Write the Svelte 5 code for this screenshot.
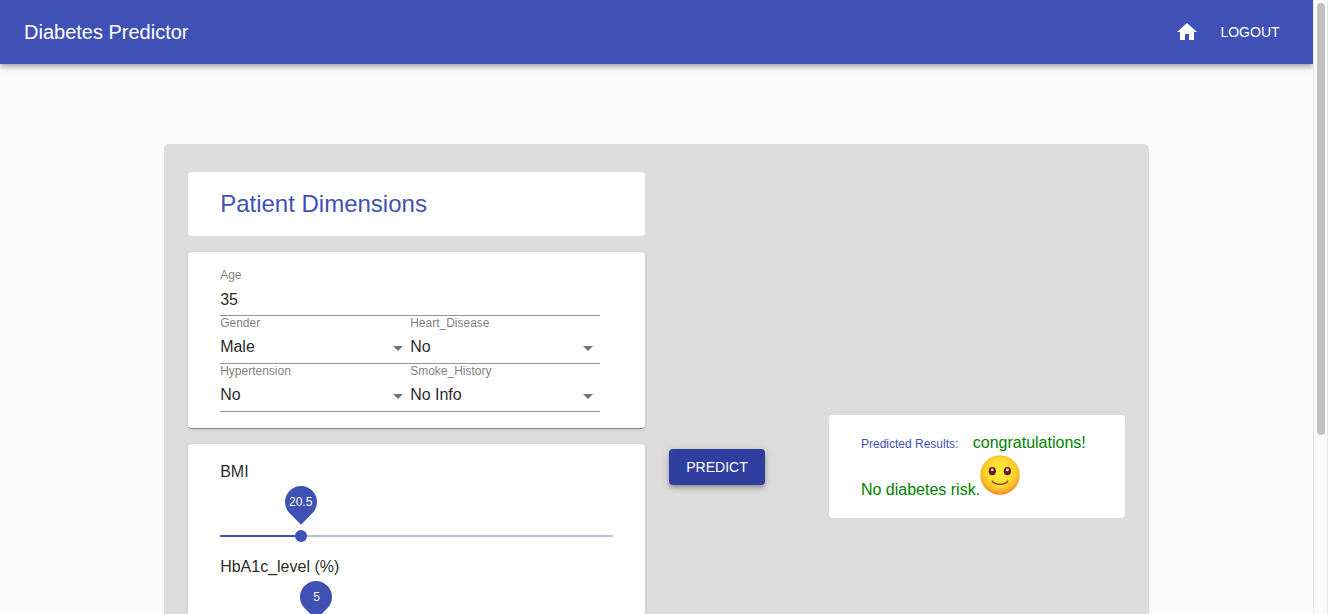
<script>
  let age = $state('35');

  const selects = $state([
    { id: 'gender', label: 'Gender', value: 'Male', options: ['Male', 'Female'] },
    { id: 'heart-disease', label: 'Heart_Disease', value: 'No', options: ['No', 'Yes'] },
    { id: 'hypertension', label: 'Hypertension', value: 'No', options: ['No', 'Yes'] },
    { id: 'smoke-history', label: 'Smoke_History', value: 'No Info', options: ['No Info', 'never', 'former', 'current'] }
  ]);

  const sliders = $state([
    { id: 'bmi', label: 'BMI', value: 20.5, min: 0, max: 100, step: 0.1 },
    { id: 'hba1c', label: 'HbA1c_level (%)', value: 5, min: 3.7, max: 9, step: 0.1 },
    { id: 'glucose', label: 'Blood_glucose_level', value: 100, min: 50, max: 300, step: 1 }
  ]);

  const percent = (s) => ((s.value - s.min) / (s.max - s.min)) * 100;
</script>

<div class="window">
  <div class="page">
    <header class="app-bar">
      <h1>Diabetes Predictor</h1>
      <nav>
        <a class="home" href="#home" aria-label="Home">
          <svg viewBox="0 0 24 24" width="24" height="24" aria-hidden="true">
            <path d="M10 20v-6h4v6h5v-8h3L12 3 2 12h3v8z" fill="currentColor" />
          </svg>
        </a>
        <button class="logout" type="button">LOGOUT</button>
      </nav>
    </header>

    <main class="panel">
      <div class="column">
        <section class="card heading">
          <h2>Patient Dimensions</h2>
        </section>

        <section class="card raised">
          <div class="fields">
            <div class="field wide">
              <label for="age">Age</label>
              <input id="age" type="text" bind:value={age} />
            </div>
            {#each selects as s (s.id)}
              <div class="field">
                <label for={s.id}>{s.label}</label>
                <select id={s.id} bind:value={s.value}>
                  {#each s.options as o}
                    <option value={o}>{o}</option>
                  {/each}
                </select>
                <svg class="arrow" viewBox="0 0 24 24" width="24" height="24" aria-hidden="true">
                  <path d="M7 10l5 5 5-5z" fill="currentColor" />
                </svg>
              </div>
            {/each}
          </div>
        </section>

        <section class="card raised">
          {#each sliders as s (s.id)}
            <div class="measure">
              <label for={s.id}>{s.label}</label>
              <div class="slider">
                <span class="rail"></span>
                <span class="track" style="width: {percent(s)}%"></span>
                <input id={s.id} type="range" min={s.min} max={s.max} step={s.step} bind:value={s.value} />
                <output class="bubble" for={s.id} style="left: {percent(s)}%">{s.value}</output>
              </div>
            </div>
          {/each}
        </section>
      </div>

      <div>
        <button class="predict" type="button">PREDICT</button>
      </div>

      <section class="card result">
        <span class="caption">Predicted Results:</span>
        <span class="message">congratulations!<br />No diabetes risk.<svg
            class="smile" viewBox="0 0 40 40" width="40" height="40" role="img" aria-label="Smiling face">
            <defs>
              <radialGradient id="face" cx="50%" cy="42%" r="58%">
                <stop offset="0" stop-color="#ffee38" />
                <stop offset="0.55" stop-color="#fddc30" />
                <stop offset="0.8" stop-color="#fbbd28" />
                <stop offset="1" stop-color="#f18420" />
              </radialGradient>
            </defs>
            <circle cx="20" cy="20" r="19.7" fill="url(#face)" />
            <ellipse cx="12.3" cy="16.2" rx="3.6" ry="4.1" fill="#6b1a2b" />
            <ellipse cx="27.4" cy="16.2" rx="3.6" ry="4.1" fill="#6b1a2b" />
            <circle cx="12.3" cy="14.8" r="1.4" fill="#f2dfe0" />
            <circle cx="27.4" cy="14.8" r="1.4" fill="#f2dfe0" />
            <path d="M12.2 26.2C15 30.4 25 30.4 27.8 26.2" fill="none" stroke="#8a4410" stroke-width="1.5" stroke-linecap="round" />
          </svg></span>
      </section>
    </main>
  </div>

  <div class="scrollbar" aria-hidden="true"><div class="thumb"></div></div>
</div>

<style>
  :global(body) {
    margin: 0;
    background: #fafafa;
  }

  .window {
    display: flex;
    height: 100vh;
    overflow: hidden;
    background: #fafafa;
    color: rgba(0, 0, 0, 0.87);
    font-family: 'Liberation Sans', Helvetica, Arial, sans-serif;
    font-size: 16px;
    line-height: 24px;
  }

  .window *,
  .window {
    box-sizing: border-box;
  }

  .page {
    flex: 1;
    min-width: 0;
    padding-bottom: 80px;
    overflow-x: hidden;
    overflow-y: auto;
    scrollbar-width: none;
  }

  .scrollbar {
    flex: none;
    width: 15px;
    padding: 3px;
    border: solid #e8e8e8;
    border-width: 0 1px;
  }

  .thumb {
    width: 8px;
    height: 71%;
    border-radius: 4px;
    background: #c1c1c1;
  }

  .app-bar {
    display: flex;
    align-items: center;
    justify-content: space-between;
    height: 64px;
    padding: 0 24px;
    background: #3f51b5;
    color: #fff;
    box-shadow:
      0 2px 4px -1px rgba(0, 0, 0, 0.2),
      0 4px 5px 0 rgba(0, 0, 0, 0.14),
      0 1px 10px 0 rgba(0, 0, 0, 0.12);
  }

  h1,
  h2 {
    margin: 0;
    font-weight: 400;
  }

  h1 {
    font-size: 20px;
    line-height: 32px;
  }

  h2 {
    font-size: 24px;
    line-height: 32px;
    color: #3f51b5;
  }

  nav {
    display: flex;
    align-items: center;
    gap: 12px;
  }

  .home {
    display: flex;
    color: inherit;
  }

  button {
    border: 0;
    border-radius: 4px;
    color: #fff;
    font-family: inherit;
    font-size: 14px;
    line-height: 24px;
    cursor: pointer;
  }

  .logout {
    min-width: 78px;
    padding: 6px 8px;
    background: transparent;
  }

  .panel {
    display: grid;
    grid-template-columns: 457fr 136fr 296fr;
    align-items: center;
    gap: 24px;
    width: 75%;
    margin: 80px auto 0;
    padding: 28px 24px 27px;
    border-radius: 5px;
    background: #dcdcdc;
  }

  .column {
    display: flex;
    flex-direction: column;
    gap: 16px;
    min-width: 0;
  }

  .card {
    padding: 16px 32px;
    border-radius: 4px;
    background: #fff;
  }

  .raised {
    box-shadow:
      0 2px 1px -1px rgba(0, 0, 0, 0.2),
      0 1px 1px 0 rgba(0, 0, 0, 0.14),
      0 1px 3px 0 rgba(0, 0, 0, 0.12);
  }

  .fields {
    display: grid;
    grid-template-columns: 1fr 1fr;
    max-width: 380px;
  }

  .field {
    position: relative;
    display: flex;
    flex-direction: column;
    height: 48px;
    border-bottom: 1px solid #949494;
  }

  .wide {
    grid-column: 1 / -1;
  }

  .field label {
    font-size: 12px;
    line-height: 14px;
    color: rgba(0, 0, 0, 0.54);
  }

  .field input,
  .field select {
    flex: 1;
    width: 100%;
    min-height: 0;
    margin: 0;
    padding: 0;
    border: 0;
    outline: 0;
    background: transparent;
    color: inherit;
    font: inherit;
    appearance: none;
  }

  .field input {
    padding-top: 2px;
  }

  .arrow {
    position: absolute;
    right: 0;
    top: 20px;
    color: rgba(0, 0, 0, 0.54);
    pointer-events: none;
  }

  .measure {
    height: 95px;
  }

  .measure label {
    display: block;
  }

  .slider {
    position: relative;
    height: 24px;
    margin-top: 40px;
  }

  .rail,
  .track {
    position: absolute;
    left: 0;
    top: 11px;
    height: 2px;
    border-radius: 1px;
    background: #3f51b5;
  }

  .rail {
    width: 100%;
    opacity: 0.38;
  }

  /* Widened by one thumb so that the thumb centre runs the whole rail. */
  .slider input {
    position: relative;
    display: block;
    width: calc(100% + 12px);
    height: 24px;
    margin: 0 -6px;
    background: transparent;
    appearance: none;
  }

  .slider input::-webkit-slider-thumb {
    width: 12px;
    height: 12px;
    border-radius: 50%;
    background: #3f51b5;
    appearance: none;
  }

  .bubble {
    position: absolute;
    top: -38px;
    width: 32px;
    height: 32px;
    margin-left: -16px;
    color: #fff;
    font-size: 12px;
    line-height: 32px;
    text-align: center;
    isolation: isolate;
  }

  .bubble::before {
    content: '';
    position: absolute;
    inset: 0;
    z-index: -1;
    border-radius: 50% 50% 0 50%;
    background: #3f51b5;
    transform: rotate(45deg);
  }

  .predict {
    display: block;
    min-width: 96px;
    padding: 6px 16px;
    background: #303f9f;
    box-shadow:
      0 2px 4px -1px rgba(0, 0, 0, 0.2),
      0 4px 5px 0 rgba(0, 0, 0, 0.14),
      0 1px 10px 0 rgba(0, 0, 0, 0.12);
  }

  .caption {
    margin-right: 10px;
    color: #3f51b5;
    font-size: 12px;
  }

  .message {
    color: green;
  }

  .smile {
    margin-top: -1px;
    vertical-align: baseline;
  }
</style>
